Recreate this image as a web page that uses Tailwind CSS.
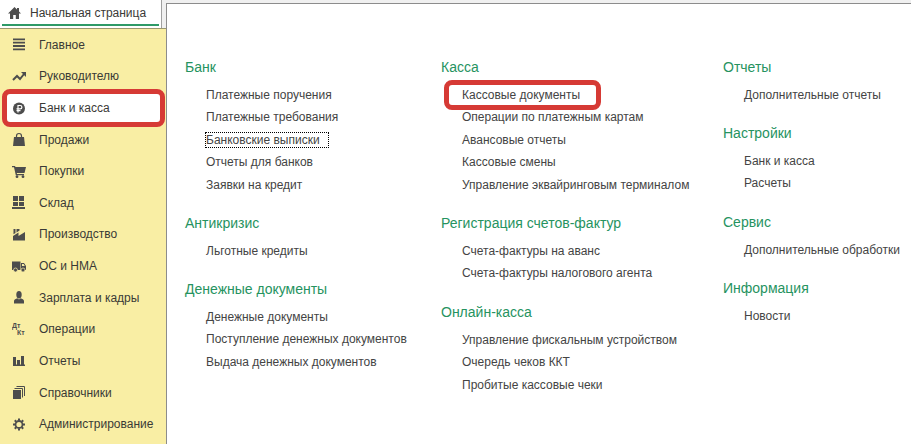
<!DOCTYPE html>
<html lang="ru">
<head>
    <meta charset="UTF-8">
    <meta name="viewport" content="width=device-width, initial-scale=1.0">
    <title>Банк и касса</title>
    <script src="https://cdn.jsdelivr.net/npm/@tailwindcss/browser@4"></script>
</head>
<body class="min-h-screen flex bg-[#f0f0f0] font-['Liberation_Sans',Arial,sans-serif] text-xs text-[#444]">

    <!-- Left column: home tab and sections -->
    <div class="w-[166px] shrink-0 flex flex-col text-[#3a3a36]">
        <a href="#" class="h-7 mr-1 pl-2 pt-1 bg-white border-r border-[#a0a0a0] block">
            <span class="flex items-center gap-2 h-[18px]">
                <svg class="size-3.5" viewBox="0 0 14 14" fill="#4d4d4d"><path d="M6.500 1 0 7.500h2V13h3.200V9h2.600v4H11V7.500h2L11 5.500V2H9v1.500z"/></svg>
                Начальная страница
            </span>
            <span class="block h-0.5 mr-0.5 -ml-1.5 mt-0.5 bg-[#2f9a68]"></span>
        </a>

        <nav class="flex-1 flex flex-col bg-[#f9eea4] border-t border-[#9a976f] pb-1">
            <a href="#" class="flex-1 min-h-[31px] flex items-center gap-3 pl-3">
                <svg class="size-[15px]" viewBox="0 0 15 15" fill="#4d4d4d"><path d="M1 1.500h12v1.800H1zM1 4.800h12v1.800H1zM1 8.100h12v1.800H1zM1 11.400h12v1.800H1z"/></svg>
                Главное
            </a>
            <a href="#" class="flex-1 min-h-[31px] flex items-center gap-3 pl-3">
                <svg class="size-[15px]" viewBox="0 0 15 15" fill="none" stroke="#4d4d4d" stroke-width="2"><path d="M1 11l4-4 3 3 4-5"/><path d="M9 3h5v5z" fill="#4d4d4d" stroke="none"/></svg>
                Руководителю
            </a>
            <a href="#" class="relative flex-1 min-h-[31px] flex items-center gap-3 pl-3">
                <span class="absolute -inset-y-[3px] left-[2px] right-px rounded-lg border-5 border-[#d63a35] bg-white"></span>
                <svg class="relative size-[15px]" viewBox="0 0 15 15"><circle cx="7" cy="7.500" r="6" fill="#4d4d4d"/><path d="M6 11.500V4.500h2.200a1.700 1.700 0 0 1 0 3.400H4.500M4.500 9.700h4" fill="none" stroke="#fff" stroke-width="1.200"/></svg>
                <span class="relative">Банк и касса</span>
            </a>
            <a href="#" class="flex-1 min-h-[31px] flex items-center gap-3 pl-3">
                <svg class="size-[15px]" viewBox="0 0 15 15"><path d="M2 5h10l1 9H1z" fill="#4d4d4d"/><path d="M4.500 7V4a2.500 2.500 0 0 1 5 0v3" fill="none" stroke="#4d4d4d" stroke-width="1.200"/></svg>
                Продажи
            </a>
            <a href="#" class="flex-1 min-h-[31px] flex items-center gap-3 pl-3">
                <svg class="size-[15px]" viewBox="0 0 15 15" fill="#4d4d4d"><path d="M0 2h3l.5 1H14l-1.500 6H4.800l.2 1H12v1.200H3.800L2 3.200H0z"/><circle cx="5" cy="12.700" r="1.400"/><circle cx="11" cy="12.700" r="1.400"/></svg>
                Покупки
            </a>
            <a href="#" class="flex-1 min-h-[31px] flex items-center gap-3 pl-3">
                <svg class="size-[15px]" viewBox="0 0 15 15" fill="#4d4d4d"><path d="M1 1h5v5H1zM7 1h5v5H7zM1 7h5v4H1zM7 7h5v4H7zM0 12h13v2H0z"/></svg>
                Склад
            </a>
            <a href="#" class="flex-1 min-h-[31px] flex items-center gap-3 pl-3">
                <svg class="size-[15px]" viewBox="0 0 15 15" fill="#4d4d4d"><path d="M1 13.500V9l5.500-3.500V9L13 5v8.500zM1.500 2h2v4l-2 1.300zM4.500 2h3v1.500l-3 2z"/></svg>
                Производство
            </a>
            <a href="#" class="flex-1 min-h-[31px] flex items-center gap-3 pl-3">
                <svg class="size-[15px]" viewBox="0 0 15 15"><path d="M0 2.500h8.500V11H0zM9 4h3l2 3v4H9z" fill="#4d4d4d"/><path d="M10 5h1.600l1.200 2H10z" fill="#f9eea4"/><circle cx="3.500" cy="11" r="2" fill="#4d4d4d" stroke="#f9eea4" stroke-width=".7"/><circle cx="11" cy="11" r="2" fill="#4d4d4d" stroke="#f9eea4" stroke-width=".7"/></svg>
                ОС и НМА
            </a>
            <a href="#" class="flex-1 min-h-[31px] flex items-center gap-3 pl-3">
                <svg class="size-[15px]" viewBox="0 0 15 15" fill="#4d4d4d"><ellipse cx="7" cy="4.700" rx="2.700" ry="3.700"/><path d="M2 13.500V11C2 9.500 4 9 5.300 8.300L7 9.500l1.700-1.200C10 9 12 9.500 12 11v2.500z"/></svg>
                Зарплата и кадры
            </a>
            <a href="#" class="flex-1 min-h-[31px] flex items-center gap-3 pl-3">
                <svg class="size-[15px]" viewBox="0 0 15 15" fill="#4d4d4d" font-size="7" font-weight="bold"><text x="0" y="6">Дт</text><text x="5" y="13">Кт</text></svg>
                Операции
            </a>
            <a href="#" class="flex-1 min-h-[31px] flex items-center gap-3 pl-3">
                <svg class="size-[15px]" viewBox="0 0 15 15" fill="#4d4d4d"><path d="M1 4h3v8H1zM5 7h3v5H5zM9 3h3v9H9zM1 11.500h12V13H1z"/></svg>
                Отчеты
            </a>
            <a href="#" class="flex-1 min-h-[31px] flex items-center gap-3 pl-3">
                <svg class="size-[15px]" viewBox="0 0 15 15"><path d="M1 5h8v9H1z" fill="#4d4d4d"/><path d="M2.500 3.500h8v9M4.500 1.500h8v9.500" fill="none" stroke="#4d4d4d"/></svg>
                Справочники
            </a>
            <a href="#" class="flex-1 min-h-[31px] flex items-center gap-3 pl-3">
                <svg class="size-[15px]" viewBox="0 0 15 15" fill="none" stroke="#4d4d4d"><circle cx="7" cy="7.500" r="3.500" stroke-width="1.800"/><path d="M7 1.500v2M7 11.500v2M1 7.500h2M11 7.500h2M2.800 3.300l1.400 1.400M9.800 10.300l1.400 1.400M2.800 11.700l1.400-1.400M9.800 4.700l1.400-1.400" stroke-width="2"/></svg>
                Администрирование
            </a>
        </nav>
    </div>

    <!-- Commands of the open section -->
    <main class="flex-1 mt-[3px] border-t border-l border-[#8c8c8c] bg-white pt-[52px] pl-[18px] grid grid-cols-[256fr_282fr_188fr] content-start whitespace-nowrap">
        <div class="flex flex-col gap-4">
            <section>
                <h2 class="mb-1.5 text-sm leading-[22px] text-[#26935f]">Банк</h2>
                <ul class="pl-[21px] leading-[22px]">
                    <li class="even:pb-px"><a href="#">Платежные поручения</a></li>
                    <li class="even:pb-px"><a href="#">Платежные требования</a></li>
                    <li class="even:pb-px"><a href="#" class="pr-2 outline-1 outline-dotted outline-black">Банковские выписки</a></li>
                    <li class="even:pb-px"><a href="#">Отчеты для банков</a></li>
                    <li class="even:pb-px"><a href="#">Заявки на кредит</a></li>
                </ul>
            </section>
            <section>
                <h2 class="mb-1.5 text-sm leading-[22px] text-[#26935f]">Антикризис</h2>
                <ul class="pl-[21px] leading-[22px]">
                    <li class="even:pb-px"><a href="#">Льготные кредиты</a></li>
                </ul>
            </section>
            <section>
                <h2 class="mb-1.5 text-sm leading-[22px] text-[#26935f]">Денежные документы</h2>
                <ul class="pl-[21px] leading-[22px]">
                    <li class="even:pb-px"><a href="#">Денежные документы</a></li>
                    <li class="even:pb-px"><a href="#">Поступление денежных документов</a></li>
                    <li class="even:pb-px"><a href="#">Выдача денежных документов</a></li>
                </ul>
            </section>
        </div>

        <div class="flex flex-col gap-4">
            <section>
                <h2 class="mb-1.5 text-sm leading-[22px] text-[#26935f]">Касса</h2>
                <ul class="pl-[21px] leading-[22px]">
                    <li class="even:pb-px">
                        <a href="#" class="relative">Кассовые документы<span class="absolute -left-[18px] -right-[21px] -inset-y-2 rounded-lg border-5 border-[#d63a35]"></span></a>
                    </li>
                    <li class="even:pb-px"><a href="#">Операции по платежным картам</a></li>
                    <li class="even:pb-px"><a href="#">Авансовые отчеты</a></li>
                    <li class="even:pb-px"><a href="#">Кассовые смены</a></li>
                    <li class="even:pb-px"><a href="#">Управление эквайринговым терминалом</a></li>
                </ul>
            </section>
            <section>
                <h2 class="mb-1.5 text-sm leading-[22px] text-[#26935f]">Регистрация счетов-фактур</h2>
                <ul class="pl-[21px] leading-[22px]">
                    <li class="even:pb-px"><a href="#">Счета-фактуры на аванс</a></li>
                    <li class="even:pb-px"><a href="#">Счета-фактуры налогового агента</a></li>
                </ul>
            </section>
            <section>
                <h2 class="mb-1.5 text-sm leading-[22px] text-[#26935f]">Онлайн-касса</h2>
                <ul class="pl-[21px] leading-[22px]">
                    <li class="even:pb-px"><a href="#">Управление фискальным устройством</a></li>
                    <li class="even:pb-px"><a href="#">Очередь чеков ККТ</a></li>
                    <li class="even:pb-px"><a href="#">Пробитые кассовые чеки</a></li>
                </ul>
            </section>
        </div>

        <div class="flex flex-col gap-4">
            <section>
                <h2 class="mb-1.5 text-sm leading-[22px] text-[#26935f]">Отчеты</h2>
                <ul class="pl-[21px] leading-[22px]">
                    <li class="even:pb-px"><a href="#">Дополнительные отчеты</a></li>
                </ul>
            </section>
            <section>
                <h2 class="mb-1.5 text-sm leading-[22px] text-[#26935f]">Настройки</h2>
                <ul class="pl-[21px] leading-[22px]">
                    <li class="even:pb-px"><a href="#">Банк и касса</a></li>
                    <li class="even:pb-px"><a href="#">Расчеты</a></li>
                </ul>
            </section>
            <section>
                <h2 class="mb-1.5 text-sm leading-[22px] text-[#26935f]">Сервис</h2>
                <ul class="pl-[21px] leading-[22px]">
                    <li class="even:pb-px"><a href="#">Дополнительные обработки</a></li>
                </ul>
            </section>
            <section>
                <h2 class="mb-1.5 text-sm leading-[22px] text-[#26935f]">Информация</h2>
                <ul class="pl-[21px] leading-[22px]">
                    <li class="even:pb-px"><a href="#">Новости</a></li>
                </ul>
            </section>
        </div>
    </main>

</body>
</html>
